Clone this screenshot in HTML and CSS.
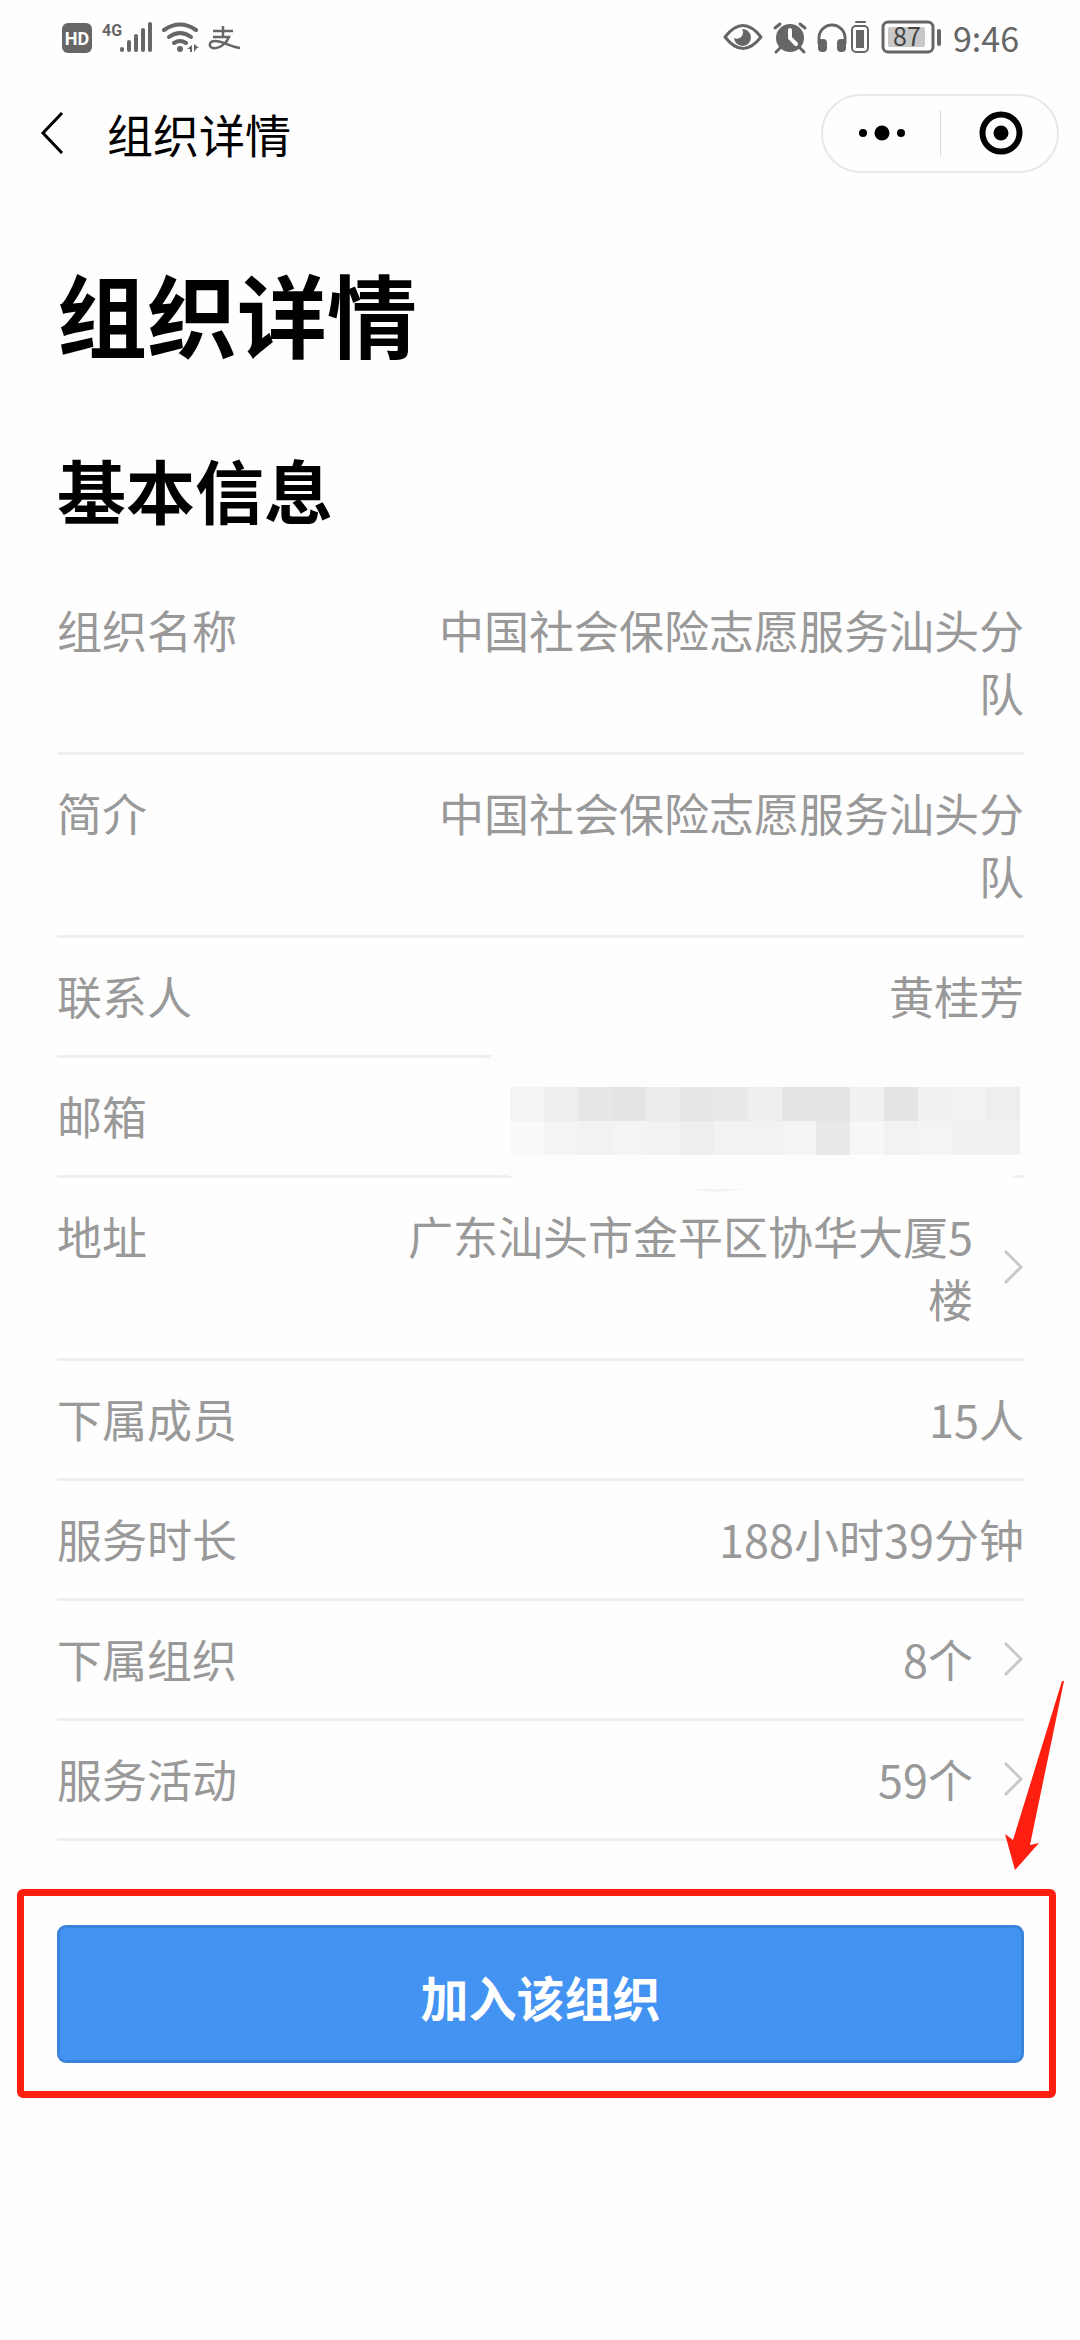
FILE: index.html
```html
<!DOCTYPE html>
<html lang="zh-CN">
<head>
<meta charset="utf-8">
<meta name="viewport" content="width=device-width">
<title>组织详情</title>
<link rel="stylesheet" href="styles.css">
</head>
<body>
<div class="status">
  <div class="status-group">
    <svg width="180" height="40" viewBox="61 18 180 40" role="img" aria-label="HD 4G">
      <rect x="62" y="23" width="30" height="30" rx="6" fill="#666"/>
      <text x="77" y="45" class="hd">HD</text>
      <text x="102" y="36" class="net">4G</text>
      <g stroke="#666" stroke-width="4" stroke-linecap="round" fill="none">
        <path d="M122 49v1M129 42v8M136 36v14M143 30v20M150 24v26"/>
        <path d="M164 30q16-11 32 0M169 37q11-8 22 0M174 43q6-4 12 0"/>
      </g>
      <circle cx="180" cy="49" r="3" fill="#666"/>
      <path d="M192 45v7h-2v-3h-3zM194 44l5 4h-2l-3 4z" fill="#666"/>
      <path d="M213 31h20M223 26v10M213 37h16c-4 9-12 12-16 11-5-1-4-7 2-7 8 0 15 6 25 7" fill="none" stroke="#666" stroke-width="2.5"/>
    </svg>
  </div>
  <div class="status-group">
    <svg width="220" height="40" viewBox="722 18 220 40" role="img" aria-label="电量 87">
      <path d="M724 37q18-23 36 0q-18 23-36 0z" fill="none" stroke="#666" stroke-width="3" stroke-linejoin="round"/>
      <path d="M741 29a8.500 8.500 0 1 1-8 9q5 2 8-2 2-4 0-7z" fill="#666"/>
      <circle cx="789" cy="38" r="14" fill="#666"/>
      <path d="M774 28l5-4M804 28l-5-4M779 48l-4 4M799 48l4 4" stroke="#666" stroke-width="3" stroke-linecap="round"/>
      <path d="M789 30v8l6 6" fill="none" stroke="#fff" stroke-width="4" stroke-linecap="round"/>
      <path d="M818 44v-6a13 13 0 0 1 26 0v6" fill="none" stroke="#666" stroke-width="3"/>
      <rect x="817" y="39" width="9" height="13" rx="4" fill="#666"/>
      <rect x="836" y="39" width="9" height="13" rx="4" fill="#666"/>
      <rect x="851" y="26" width="16" height="26" rx="4" fill="none" stroke="#666" stroke-width="2"/>
      <path d="M855 22h9" stroke="#666" stroke-width="2" stroke-linecap="round"/>
      <rect x="855" y="30" width="8" height="18" fill="#666"/>
      <rect x="882" y="22" width="50" height="30" rx="5" fill="none" stroke="#666" stroke-width="3"/>
      <rect x="887" y="27" width="37" height="20" rx="2" fill="#c8c8c8"/>
      <path d="M938 31v13" stroke="#666" stroke-width="4" stroke-linecap="round"/>
      <text x="906" y="46" class="charge">87</text>
    </svg>
    <time class="clock">9:46</time>
  </div>
</div>

<header class="nav">
  <button class="back" type="button" aria-label="返回">
    <svg width="24" height="42" viewBox="0 0 24 42"><path d="M22 1L3 21l19 20" fill="none" stroke="#000" stroke-width="3"/></svg>
  </button>
  <span class="nav-title">组织详情</span>
  <div class="capsule">
    <button type="button" aria-label="更多">
      <svg width="48" height="16" viewBox="0 0 48 16"><circle cx="5" cy="8" r="4"/><circle cx="24" cy="8" r="7.500"/><circle cx="43" cy="8" r="4"/></svg>
    </button>
    <button type="button" aria-label="关闭">
      <svg width="44" height="44" viewBox="0 0 44 44"><circle cx="22" cy="22" r="18.500" fill="none" stroke="#000" stroke-width="6"/><circle cx="22" cy="22" r="7.500"/></svg>
    </button>
  </div>
</header>

<main class="page">
  <h1>组织详情</h1>
  <h2>基本信息</h2>
  <dl class="info">
    <div class="row"><dt>组织名称</dt><dd>中国社会保险志愿服务汕头分队</dd></div>
    <div class="row"><dt>简介</dt><dd>中国社会保险志愿服务汕头分队</dd></div>
    <div class="row"><dt>联系人</dt><dd>黄桂芳</dd></div>
    <div class="row"><dt>邮箱</dt><dd>
      <svg class="mask" width="590" height="156" viewBox="466 1040 590 156" role="img" aria-label="已隐藏">
        <path d="M467 1099C470 1080 478 1068 492 1056Q502 1044 530 1044H1010C1040 1050 1055 1075 1055 1095C1055 1160 1030 1182 985 1182C950 1192 880 1189 820 1190H690Q660 1182 620 1182H530C508 1180 492 1170 480 1156H510V1088H468z" fill="#fdfdfd"/>
        <path d="M691 1190h54q-27 6-54 0z" fill="#f3f3f3"/>
        <g shape-rendering="crispEdges">
          <path fill="#f4f4f4" d="M510 1088h34v34h-34zM544 1122h34v34h-34zM612 1122h34v34h-34zM782 1122h34v34h-34zM918 1122h34v34h-34z"/>
          <path fill="#eee" d="M544 1088h34v34h-34zM748 1088h34v34h-34zM986 1088h34v34h-34zM680 1122h34v34h-34z"/>
          <path fill="#e7e7e7" d="M578 1088h34v34h-34zM680 1088h34v34h-34z"/>
          <path fill="#e4e4e4" d="M612 1088h34v34h-34zM782 1088h68v34h-68zM884 1088h34v34h-34z"/>
          <path fill="#ececec" d="M646 1088h34v34h-34z"/>
          <path fill="#e9e9e9" d="M714 1088h34v34h-34zM816 1122h34v34h-34z"/>
          <path fill="#f1f1f1" d="M850 1088h34v34h-34zM918 1088h34v34h-34zM952 1122h68v34h-68z"/>
          <path fill="#f2f2f2" d="M952 1088h34v34h-34zM578 1122h34v34h-34zM646 1122h34v34h-34zM714 1122h68v34h-68zM884 1122h34v34h-34z"/>
          <path fill="#fafafa" d="M510 1122h34v34h-34z"/>
          <path fill="#f7f7f7" d="M850 1122h34v34h-34z"/>
        </g>
      </svg>
    </dd></div>
    <div class="row"><dt>地址</dt><dd><a href="#address"><span>广东汕头市金平区协华大厦5楼</span><svg class="more" width="21" height="36" viewBox="0 0 21 36"><path d="M2 2l16 16L2 34"/></svg></a></dd></div>
    <div class="row"><dt>下属成员</dt><dd>15人</dd></div>
    <div class="row"><dt>服务时长</dt><dd>188小时39分钟</dd></div>
    <div class="row"><dt>下属组织</dt><dd><a href="#groups"><span>8个</span><svg class="more" width="21" height="36" viewBox="0 0 21 36"><path d="M2 2l16 16L2 34"/></svg></a></dd></div>
    <div class="row"><dt>服务活动</dt><dd><a href="#events"><span>59个</span><svg class="more" width="21" height="36" viewBox="0 0 21 36"><path d="M2 2l16 16L2 34"/></svg></a></dd></div>
  </dl>
  <div class="action">
    <button class="join" type="button">加入该组织</button>
    <div class="highlight"></div>
    <svg class="pointer" width="62" height="190" viewBox="1004 1681 62 190"><path d="M1062 1681h2l-34 164 9-2-24 27-10-36 8 6z" fill="#ff1f10"/></svg>
  </div>
</main>
</body>
</html>
```

FILE: styles.css
```css
* {
  box-sizing: border-box;
}

body {
  margin: 0;
  min-height: 100vh;
  background: #fefefe;
  color: #000;
  font-family: "Noto Sans CJK SC", sans-serif;
}

button {
  padding: 0;
  border: 0;
  background: none;
  font-family: inherit;
}

svg {
  display: block;
  flex: none;
}

/* Status bar */
.status {
  display: flex;
  justify-content: space-between;
  align-items: center;
  height: 76px;
  padding: 0 61px;
  color: #666;
}

.status-group {
  display: flex;
  align-items: center;
  gap: 10px;
}

.hd {
  fill: #fff;
  font: bold 18px Roboto, sans-serif;
  text-anchor: middle;
}

.net {
  fill: #666;
  font: bold 16px Roboto, sans-serif;
}

.charge {
  fill: #444;
  font-size: 25px;
  text-anchor: middle;
}

.clock {
  font-size: 34px;
  line-height: 40px;
}

/* Navigation bar */
.nav {
  display: flex;
  align-items: center;
  height: 114px;
  padding: 0 21px 0 40px;
}

.back {
  width: 67px;
}

.nav-title {
  flex: 1;
  font-size: 46px;
  line-height: 64px;
}

.capsule {
  display: flex;
  width: 238px;
  height: 79px;
  border: 2px solid #e8e8e8;
  border-radius: 40px;
}

.capsule button {
  display: flex;
  flex: 1;
  align-items: center;
  justify-content: center;
}

.capsule button + button::before {
  content: "";
  width: 1px;
  height: 47px;
  margin-right: 38px;
  background: #ddd;
}

.capsule button + button {
  justify-content: flex-start;
}

/* Content */
.page {
  padding: 59px 56px 140px 57px;
}

h1 {
  margin: 0 0 66px;
  font-size: 90px;
  line-height: 126px;
}

h2 {
  margin: 0 0 35px;
  font-size: 69px;
  line-height: 96px;
}

.info {
  margin: 0;
  color: #999;
  font-size: 45px;
  line-height: 63px;
}

.row {
  display: flex;
  justify-content: space-between;
  padding: 26px 0 28px;
  border-bottom: 3px solid #efefef;
}

dd {
  position: relative;
  width: 65%;
  margin: 0;
  text-align: right;
}

dd a {
  display: flex;
  align-items: center;
  justify-content: flex-end;
  gap: 30px;
  color: inherit;
  text-decoration: none;
}

.more {
  fill: none;
  stroke: #c8c8c8;
  stroke-width: 3px;
}

.mask {
  position: absolute;
  top: -45px;
  right: -32px;
}

/* Join button with its marker */
.action {
  position: relative;
  margin-top: 84px;
}

.join {
  display: block;
  width: 100%;
  height: 138px;
  padding-top: 4px;
  border: 3px solid #3a84dc;
  border-radius: 9px;
  background: #4393f2;
  color: #fff;
  font-size: 48px;
  font-weight: bold;
}

.highlight {
  position: absolute;
  inset: -36px -32px -35px -40px;
  border: 7px solid #ff1f10;
  border-radius: 6px;
  pointer-events: none;
}

.pointer {
  position: absolute;
  top: -244px;
  right: -42px;
  pointer-events: none;
}
```
